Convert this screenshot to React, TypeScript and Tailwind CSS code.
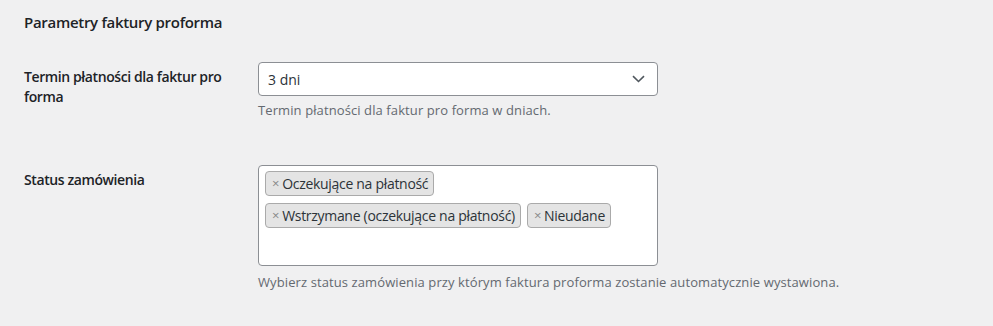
const STATUSES = [
  ["Oczekujące na płatność"],
  ["Wstrzymane (oczekujące na płatność)", "Nieudane"],
];

function Chip({ label }: { label: string }) {
  return (
    <span className="flex h-[25px] items-center rounded-[4px] border border-[#aaaaaa] bg-[#e4e4e4] pl-[6px] pr-[5px] text-[14px] tracking-[-0.3px] text-[#2c3338]">
      <span className="mr-[3px] text-[13px] leading-none text-[#888]">×</span>
      {label}
    </span>
  );
}

export default function App() {
  return (
    <div className="min-h-[326px] w-[993px] bg-[#f0f0f1] pl-6 pt-[11px] font-['Segoe_UI','Open_Sans',sans-serif] text-[#1d2327]">
      <h2 className="text-[15px] font-semibold leading-[22px] tracking-[-0.3px]">Parametry faktury proforma</h2>

      <div className="mt-[29px] flex">
        <div className="w-[234px] pr-6 pt-[5px] text-[14px] font-semibold leading-[20px] tracking-[-0.4px]">
          Termin płatności dla faktur pro forma
        </div>
        <div>
          <div className="flex h-[34px] w-[400px] items-center justify-between rounded-[4px] border border-[#8c8f94] bg-white pl-[9px] pr-[12px] text-[14px] text-[#2c3338]">
            <span>3 dni</span>
            <svg width="13" height="8" viewBox="0 0 13 8" fill="none">
              <path d="M1 1.2l5.5 5.3L12 1.2" stroke="#50575e" strokeWidth="1.6" />
            </svg>
          </div>
          <p className="mt-[4px] text-[13px] leading-[20px] tracking-[0.1px] text-[#646970]">
            Termin płatności dla faktur pro forma w dniach.
          </p>
        </div>
      </div>

      <div className="mt-[45px] flex">
        <div className="w-[234px] pt-[5px] text-[14px] font-semibold leading-[20px] tracking-[-0.4px]">Status zamówienia</div>
        <div>
          <div className="flex h-[101px] w-[400px] flex-col gap-[7px] rounded-[4px] border border-[#8c8f94] bg-white px-[6px] pt-[5px]">
            {STATUSES.map((row, i) => (
              <div key={i} className="flex gap-[6px]">
                {row.map((s) => (
                  <Chip key={s} label={s} />
                ))}
              </div>
            ))}
          </div>
          <p className="mt-[6px] text-[13px] leading-[20px] tracking-[0.1px] text-[#646970]">
            Wybierz status zamówienia przy którym faktura proforma zostanie automatycznie wystawiona.
          </p>
        </div>
      </div>
    </div>
  );
}
